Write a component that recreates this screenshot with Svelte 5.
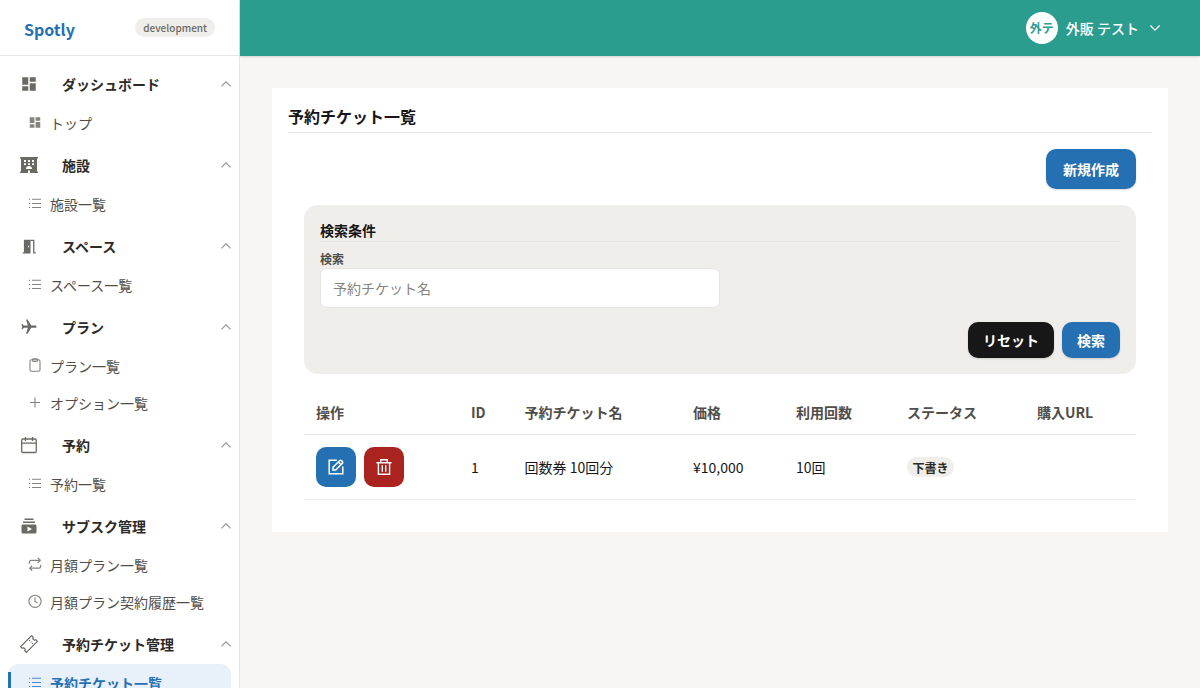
<script>
    const groups = [
        { title: 'ダッシュボード', icon: 'dashboard', items: [{ label: 'トップ', icon: 'dashboard' }] },
        { title: '施設', icon: 'hotel', items: [{ label: '施設一覧', icon: 'list' }] },
        { title: 'スペース', icon: 'door', items: [{ label: 'スペース一覧', icon: 'list' }] },
        {
            title: 'プラン',
            icon: 'plane',
            items: [
                { label: 'プラン一覧', icon: 'clipboard' },
                { label: 'オプション一覧', icon: 'plus' },
            ],
        },
        { title: '予約', icon: 'calendar', items: [{ label: '予約一覧', icon: 'list' }] },
        {
            title: 'サブスク管理',
            icon: 'subscriptions',
            items: [
                { label: '月額プラン一覧', icon: 'repeat' },
                { label: '月額プラン契約履歴一覧', icon: 'clock' },
            ],
        },
        {
            title: '予約チケット管理',
            icon: 'ticket',
            items: [{ label: '予約チケット一覧', icon: 'list', active: true }],
        },
    ];

    const columns = ['操作', 'ID', '予約チケット名', '価格', '利用回数', 'ステータス', '購入URL'];
    const tickets = [
        { id: 1, name: '回数券 10回分', price: '¥10,000', count: '10回', status: '下書き' },
    ];

    let keyword = '';

    function reset() {
        keyword = '';
    }
</script>

<div class="layout">
    <aside class="sidebar">
        <div class="brand">
            <span class="logo">Spotly</span>
            <span class="env">development</span>
        </div>
        <nav>
            {#each groups as group}
                <section class="group">
                    <div class="group-title">
                        <span class="group-icon">
                            {#if group.icon === 'dashboard'}
                                <svg width="18" height="18" viewBox="0 0 24 24" fill="currentColor"><path d="M3 13h8V3H3v10zm0 8h8v-6H3v6zm10 0h8V11h-8v10zm0-18v6h8V3h-8z" /></svg>
                            {:else if group.icon === 'hotel'}
                                <svg width="18" height="16" viewBox="0 0 18 16" fill="currentColor"><path fill-rule="evenodd" d="M.5 0h17a.5.5 0 0 1 .5.5v.6a.5.5 0 0 1-.5.5H17v12.800h.5a.5.5 0 0 1 .5.5v.6a.5.5 0 0 1-.5.5H10v-2.500H8V16H.5a.5.5 0 0 1-.5-.5v-.6a.5.5 0 0 1 .5-.5H1V1.600H.5a.5.5 0 0 1-.5-.5V.5A.5.5 0 0 1 .5 0zM4 3.100v1.900h2V3.100zm4 0v1.900h2V3.100zm4 0v1.900h2V3.100zM4 6.200v1.900h2V6.200zm4 0v1.900h2V6.200zm4 0v1.900h2V6.200zM6 12h6a3 3 0 0 0-6 0z" /></svg>
                            {:else if group.icon === 'door'}
                                <svg width="15" height="15" viewBox="0 0 15 15" fill="currentColor"><path fill-rule="evenodd" d="M1.900.7h6.600v13.800H.7v-1.300h1.200zM6 6.700v1.500h1V6.700z" /><path d="M8.500.7h3.900v12.500h1.300v1.300h-2.600V2H8.500z" /></svg>
                            {:else if group.icon === 'plane'}
                                <svg width="18" height="18" viewBox="0 0 24 24" fill="currentColor"><path transform="rotate(90 12 12)" d="M21 16v-2l-8-5V3.500c0-.83-.67-1.500-1.500-1.500S10 2.670 10 3.500V9l-8 5v2l8-2.500V19l-2 1.500V22l3.500-1 3.500 1v-1.500L13 19v-5.500l8 2.500z" /></svg>
                            {:else if group.icon === 'calendar'}
                                <svg width="18" height="18" viewBox="0 0 18 18" fill="none" stroke="currentColor" stroke-width="1.300"><rect x="1.700" y="3" width="14.600" height="13.500" rx="1.300" /><path d="M1.700 7.200h14.600M5.500 1v4M12.500 1v4" /></svg>
                            {:else if group.icon === 'subscriptions'}
                                <svg width="18" height="18" viewBox="0 0 24 24" fill="currentColor"><path d="M20 8H4V6h16v2zm-2-6H6v2h12V2zm4 10v8c0 1.100-.9 2-2 2H4c-1.100 0-2-.9-2-2v-8c0-1.100.9-2 2-2h16c1.100 0 2 .9 2 2zm-6 4l-6-3.270v6.530L16 16z" /></svg>
                            {:else}
                                <svg width="18" height="18" viewBox="0 0 18 18" fill="none" stroke="currentColor" stroke-width="1.200" stroke-linejoin="round"><g transform="rotate(-45 9 9)"><path d="M1.200 4.900h15.600v2.500a1.600 1.600 0 0 0 0 3.200v2.500H1.200v-2.500a1.600 1.600 0 0 0 0-3.200z" /><path d="M11.800 6.500v1M11.800 8.700v.9M11.800 10.700v1" /></g></svg>
                            {/if}
                        </span>
                        <span class="group-label">{group.title}</span>
                        <svg class="chevron" width="10" height="6" viewBox="0 0 10 6" fill="none" stroke="currentColor" stroke-width="1.200"><path d="M.4 5.400 5 .8l4.600 4.600" /></svg>
                    </div>
                    {#each group.items as item}
                        <a href="#{item.label}" class="item" class:active={item.active}>
                            <span class="item-icon">
                                {#if item.icon === 'dashboard'}
                                    <svg width="15" height="15" viewBox="0 0 24 24" fill="currentColor"><path d="M3 13h8V3H3v10zm0 8h8v-6H3v6zm10 0h8V11h-8v10zm0-18v6h8V3h-8z" /></svg>
                                {:else if item.icon === 'list'}
                                    <svg width="14" height="14" viewBox="0 0 14 14" fill="none" stroke="currentColor" stroke-width="1.100"><path d="M4 3.300h9M4 7.500h9M4 11.500h9M1 3.300h1.200M1 7.500h1.200M1 11.500h1.200" /></svg>
                                {:else if item.icon === 'clipboard'}
                                    <svg width="14" height="14" viewBox="0 0 14 14" fill="none" stroke="currentColor" stroke-width="1.100"><rect x="2" y="1.800" width="10" height="11.500" rx="1.500" /><path d="M4.500 2v.6c0 .5.300.8.800.8h3.400c.5 0 .8-.3.800-.8v-1c0-.5-.3-.8-.8-.8H5.300c-.5 0-.8.300-.8.800z" /></svg>
                                {:else if item.icon === 'plus'}
                                    <svg width="14" height="14" viewBox="0 0 14 14" fill="none" stroke="currentColor" stroke-width="1.100"><path d="M7 2.500v10M2 7.500h10" /></svg>
                                {:else if item.icon === 'repeat'}
                                    <svg width="14" height="14" viewBox="0 0 14 14" fill="none" stroke="currentColor" stroke-width="1.200"><path d="M1.300 6.700V5.200c0-1.100.7-1.900 1.800-1.900h9M9.800.8l2.500 2.500-2.500 2.500M12.700 7.800v1.500c0 1.100-.7 1.900-1.800 1.900h-9M4.200 8.700l-2.500 2.500 2.500 2.500" /></svg>
                                {:else}
                                    <svg width="14" height="14" viewBox="0 0 14 14" fill="none" stroke="currentColor" stroke-width="1.100"><circle cx="7" cy="7.300" r="6.100" /><path d="M7 3.300v4.200l2.700 1.600" /></svg>
                                {/if}
                            </span>
                            <span class="item-label">{item.label}</span>
                        </a>
                    {/each}
                </section>
            {/each}
        </nav>
    </aside>

    <div class="content">
        <header class="topbar">
            <span class="avatar">外テ</span>
            <span class="user">外販 テスト</span>
            <svg width="12" height="12" viewBox="0 0 12 12" fill="none" stroke="currentColor" stroke-width="1.200"><path d="m1.400 3.500 4.600 4.600 4.600-4.600" /></svg>
        </header>

        <main>
            <div class="card">
                <h1>予約チケット一覧</h1>
                <div class="card-body">
                    <div class="actions">
                        <button class="btn large">新規作成</button>
                    </div>

                    <form class="search" on:submit|preventDefault>
                        <h2>検索条件</h2>
                        <label for="keyword">検索</label>
                        <input id="keyword" type="text" placeholder="予約チケット名" bind:value={keyword} />
                        <div class="search-buttons">
                            <button type="button" class="btn dark" on:click={reset}>リセット</button>
                            <button type="submit" class="btn">検索</button>
                        </div>
                    </form>

                    <table>
                        <colgroup>
                            <col class="c-action" />
                            <col class="c-id" />
                            <col class="c-name" />
                            <col class="c-price" />
                            <col class="c-count" />
                            <col class="c-status" />
                            <col />
                        </colgroup>
                        <thead>
                            <tr>
                                {#each columns as column}
                                    <th>{column}</th>
                                {/each}
                            </tr>
                        </thead>
                        <tbody>
                            {#each tickets as ticket}
                                <tr>
                                    <td>
                                        <div class="row-actions">
                                            <button class="btn icon" aria-label="編集">
                                                <svg width="18" height="18" viewBox="0 0 18 18" fill="none" stroke="currentColor" stroke-width="1.500"><path d="M9.800 2.200H2.200v13.600h13.600V8.600" /><path d="m6 9.300 6.600-6.600a1.400 1.400 0 0 1 2 0l.7.700a1.400 1.400 0 0 1 0 2L8.700 12H6z" /><path d="m11.400 4 2.600 2.600" /></svg>
                                            </button>
                                            <button class="btn icon danger" aria-label="削除">
                                                <svg width="18" height="18" viewBox="0 0 18 18" fill="none" stroke="currentColor" stroke-width="1.400"><path d="M1.500 4.700h15M5.700 4.700V1.700h6.600v3M3.400 4.700v11.600h11.200V4.700" /><path d="M7.300 7.200v6.600M10.700 7.200v6.600" /></svg>
                                            </button>
                                        </div>
                                    </td>
                                    <td>{ticket.id}</td>
                                    <td>{ticket.name}</td>
                                    <td>{ticket.price}</td>
                                    <td>{ticket.count}</td>
                                    <td><span class="badge">{ticket.status}</span></td>
                                    <td></td>
                                </tr>
                            {/each}
                        </tbody>
                    </table>
                </div>
            </div>
        </main>
    </div>
</div>

<style>
    :global(body) {
        margin: 0;
        overflow: hidden;
    }

    .layout {
        display: flex;
        height: 100vh;
        overflow: hidden;
        background: #f7f6f3;
        color: #161616;
        font-family: "Noto Sans CJK JP", sans-serif;
        font-size: 14px;
        line-height: 20px;
    }

    .layout * {
        box-sizing: border-box;
    }

    .sidebar {
        flex: 0 0 240px;
        background: #fff;
        border-right: 1px solid #e5e5e5;
        overflow: hidden;
    }

    .brand {
        display: flex;
        align-items: center;
        justify-content: space-between;
        height: 56px;
        padding: 0 24px;
        border-bottom: 1px solid #e5e5e5;
    }

    .logo {
        padding-top: 2px;
        color: #2470b3;
        font-size: 16px;
        font-weight: 700;
        line-height: 24px;
    }

    .env {
        height: 19px;
        padding: 0 8px;
        border-radius: 10px;
        background: #efeeeb;
        color: #6b6963;
        font-size: 10px;
        font-weight: 500;
        line-height: 19px;
    }

    nav {
        padding: 8px;
    }

    .group {
        margin-bottom: 4px;
    }

    .group-title {
        display: flex;
        align-items: center;
        height: 40px;
        font-weight: 700;
        color: #2b2a27;
    }

    .group-icon {
        display: flex;
        justify-content: center;
        width: 42px;
        color: #6b6963;
    }

    .group-label {
        flex: 1;
        padding: 0 0 1px 12px;
    }

    .chevron {
        color: #999791;
    }

    .item {
        position: relative;
        display: flex;
        align-items: center;
        height: 37px;
        padding-left: 20px;
        border-radius: 10px;
        color: #504e49;
        text-decoration: none;
    }

    .item-icon {
        display: flex;
        justify-content: center;
        width: 14px;
        margin: -1px 8px 0 0;
        color: #85837d;
    }

    .active {
        background: #e8f0f9;
        color: #2470b3;
        font-weight: 700;
    }

    .active::before {
        content: "";
        position: absolute;
        left: 0;
        top: 8px;
        bottom: 8px;
        width: 3px;
        background: #2470b3;
    }

    .active .item-icon {
        color: #4a8ac4;
    }

    .content {
        flex: 1;
        min-width: 0;
    }

    .topbar {
        display: flex;
        align-items: center;
        justify-content: flex-end;
        height: 56px;
        padding-right: 39px;
        background: #2a9d8f;
        color: #fff;
        box-shadow: 0 1px 2px rgba(0, 0, 0, 0.15);
    }

    .avatar {
        width: 32px;
        height: 32px;
        border-radius: 50%;
        background: #fff;
        color: #2a9d8f;
        font-size: 12px;
        font-weight: 700;
        line-height: 32px;
        text-align: center;
    }

    .user {
        margin: 0 10px 0 8px;
        padding-bottom: 1px;
        font-weight: 500;
    }

    main {
        padding: 32px;
    }

    .card {
        height: 444px;
        padding: 16px;
        background: #fff;
    }

    h1 {
        margin: 0;
        height: 29px;
        border-bottom: 1px solid #e5e4e0;
        font-size: 16px;
        font-weight: 700;
        line-height: 24px;
    }

    .card-body {
        padding: 16px;
    }

    .actions {
        display: flex;
        justify-content: flex-end;
        margin-bottom: 16px;
    }

    .btn {
        display: flex;
        align-items: center;
        justify-content: center;
        height: 36px;
        padding: 0 15px 1px;
        border: 0;
        border-radius: 10px;
        background: #2470b3;
        box-shadow: 0 1px 2px rgba(0, 0, 0, 0.15);
        color: #fff;
        font-family: inherit;
        font-size: 14px;
        font-weight: 700;
        line-height: 20px;
        cursor: pointer;
    }

    .large {
        width: 90px;
        height: 40px;
        padding: 0 0 1px;
    }

    .dark {
        background: #171717;
    }

    .icon {
        width: 40px;
        height: 40px;
        padding: 0;
        box-shadow: none;
    }

    .danger {
        background: #aa231f;
    }

    .search {
        height: 169px;
        padding: 16px;
        border-radius: 14px;
        background: #efeeeb;
    }

    h2 {
        margin: 0 0 8px;
        height: 21px;
        border-bottom: 1px solid #e5e4e0;
        font-size: 14px;
        font-weight: 700;
        line-height: 19px;
    }

    label {
        display: block;
        height: 18px;
        color: #504e49;
        font-size: 12px;
        font-weight: 700;
        line-height: 18px;
    }

    input {
        display: block;
        width: 400px;
        height: 40px;
        padding: 0 12px 1px;
        border: 1px solid #e5e4e0;
        border-radius: 6px;
        background: #fff;
        font-family: inherit;
        font-size: 14px;
    }

    input::placeholder {
        color: #85837d;
    }

    .search-buttons {
        display: flex;
        justify-content: flex-end;
        gap: 8px;
        margin-top: 14px;
    }

    table {
        width: 100%;
        margin-top: 16px;
        border-spacing: 0;
        table-layout: fixed;
    }

    .c-action { width: 155px; }
    .c-id { width: 53.5px; }
    .c-name { width: 168.5px; }
    .c-price { width: 103px; }
    .c-count { width: 111px; }
    .c-status { width: 130px; }

    th,
    td {
        padding: 0 12px;
        text-align: left;
        vertical-align: middle;
        white-space: nowrap;
    }

    th {
        height: 45px;
        border-bottom: 1px solid #e5e4e0;
        color: #504e49;
        font-weight: 700;
    }

    td {
        height: 65px;
        border-bottom: 1px solid #ebeae7;
    }

    .row-actions {
        display: flex;
        gap: 8px;
    }

    .badge {
        display: inline-block;
        height: 20px;
        padding: 0 5.5px;
        border-radius: 10px;
        background: #efeeeb;
        color: #2b2a27;
        font-size: 12px;
        font-weight: 700;
        line-height: 21px;
    }
</style>
